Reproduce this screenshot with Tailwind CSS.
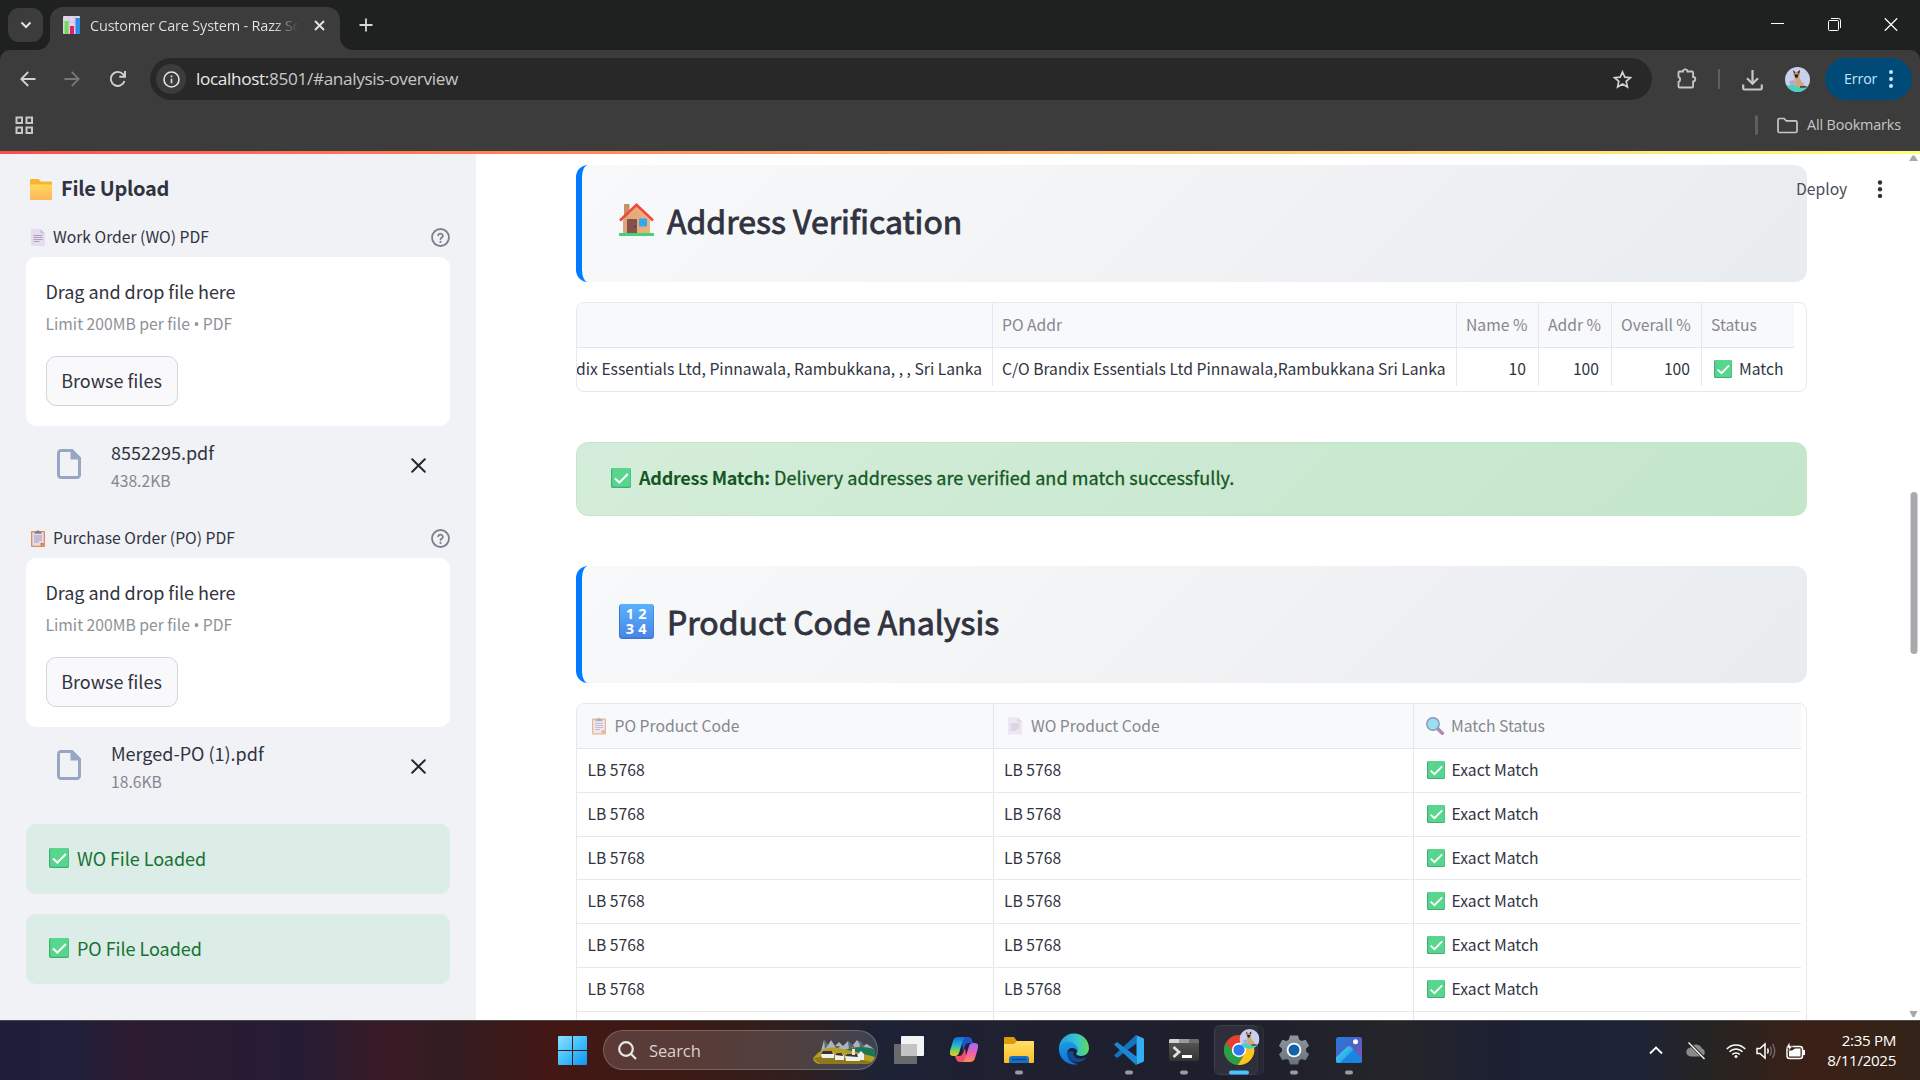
<!DOCTYPE html>
<html lang="en">
<head>
<meta charset="utf-8">
<title>Customer Care System - Razz Solutions</title>
<script src="https://cdn.jsdelivr.net/npm/@tailwindcss/browser@4"></script>
</head>
<body class="w-[1920px] h-[1080px] overflow-hidden bg-white font-['Noto_Sans_CJK_SC','Noto_Sans',sans-serif] text-[#31333f]">
<svg width="0" height="0" class="absolute">
  <defs>
    <linearGradient id="gFolder" x1="0" y1="0" x2="0" y2="1"><stop offset="0" stop-color="#ffd95a"/><stop offset="1" stop-color="#ffb45c"/></linearGradient>
    <linearGradient id="gWall" x1="0" y1="0" x2="1" y2="0"><stop offset="0" stop-color="#dfa47c"/><stop offset="1" stop-color="#eeb27a"/></linearGradient>
    <linearGradient id="gNum" x1="0" y1="0" x2="0" y2="1"><stop offset="0" stop-color="#57b3fd"/><stop offset="1" stop-color="#4a86e6"/></linearGradient>
    <linearGradient id="gWin" x1="0" y1="0" x2="1" y2="1"><stop offset="0" stop-color="#8ee0ff"/><stop offset=".5" stop-color="#41c0fb"/><stop offset="1" stop-color="#0f94f3"/></linearGradient>
    <linearGradient id="gExp" x1="0" y1="0" x2="0" y2="1"><stop offset="0" stop-color="#ffe06a"/><stop offset="1" stop-color="#fbbd22"/></linearGradient>
    <linearGradient id="gEdge" x1="0" y1="0" x2="1" y2="0"><stop offset="0" stop-color="#1f9fe0"/><stop offset=".55" stop-color="#35c1d8"/><stop offset="1" stop-color="#5fdc5a"/></linearGradient>
    <linearGradient id="gEdge2" x1="0" y1="0" x2="0" y2="1"><stop offset="0" stop-color="#1b9de2"/><stop offset="1" stop-color="#0f6fd8"/></linearGradient>
    <linearGradient id="gPho" x1="0" y1="0" x2="1" y2="1"><stop offset="0" stop-color="#1b7fe0"/><stop offset=".6" stop-color="#5a5cc0"/><stop offset="1" stop-color="#8a56b8"/></linearGradient>
    <linearGradient id="gPho2" x1="0" y1="0" x2="1" y2="1"><stop offset="0" stop-color="#4fe0f5"/><stop offset="1" stop-color="#1585e0"/></linearGradient>
    <linearGradient id="gCopA" x1="0" y1="0" x2="0" y2="1"><stop offset="0" stop-color="#1b66d8"/><stop offset=".45" stop-color="#22b8d0"/><stop offset=".75" stop-color="#8ed04a"/><stop offset="1" stop-color="#f5c52c"/></linearGradient>
    <linearGradient id="gCopB" x1="0" y1="0" x2="0" y2="1"><stop offset="0" stop-color="#9a6cf5"/><stop offset=".5" stop-color="#ea5fb8"/><stop offset="1" stop-color="#ff8a4a"/></linearGradient>
    <linearGradient id="gTerm" x1="0" y1="0" x2="0" y2="1"><stop offset="0" stop-color="#5a5a5a"/><stop offset="1" stop-color="#333"/></linearGradient>
    <linearGradient id="gGear" x1="0" y1="0" x2="0" y2="1"><stop offset="0" stop-color="#8d979d"/><stop offset="1" stop-color="#68737a"/></linearGradient>
    <clipPath id="round"><circle cx="12.5" cy="12.5" r="12.5"/></clipPath>
    <symbol id="check" viewBox="0 0 20 20"><rect width="20" height="20" rx="1.8" fill="#3fae76"/><rect x="1.2" width="18.3" height="18.8" rx="1.5" fill="#58d68d"/><path d="M4 10.6l4.3 4L16.8 6" fill="none" stroke="#fff" stroke-width="2"/></symbol>
    <symbol id="page" viewBox="0 0 14 17"><path d="M0 0h9.5L14 4.5V17H0z" fill="#e6dcf0"/><path d="M9.5 0L14 4.5H9.5z" fill="#cdbfda"/><path d="M2.500 6.500h9M2.500 8.500h9M2.500 10.500h9M2.500 12.500h6" stroke="#a899b8" stroke-width=".9"/></symbol>
    <symbol id="clip" viewBox="0 0 14 17"><rect y="1" width="14" height="16" rx=".8" fill="#e08e58"/><path d="M1.300 2.300h11.400V13L9.500 15.800H1.300z" fill="#e6dcf0"/><path d="M9.500 15.800V13h3.200z" fill="#c8733f"/><path d="M3.500 3.800V1.600h2L7 0l1.500 1.600h2v2.200z" fill="#84808c"/><path d="M3 6h8M3 8h8M3 10h8M3 12h5" stroke="#9d90ad" stroke-width=".9"/></symbol>
    <symbol id="loupe" viewBox="0 0 18 18"><path d="M12 12l4.300 4.300" stroke="#ad8aac" stroke-width="3.400" stroke-linecap="round"/><circle cx="7" cy="7" r="6.200" fill="#98dff0" stroke="#8f93be" stroke-width="1.400"/></symbol>
    <symbol id="help" viewBox="0 0 24 24"><g fill="none" stroke="#7d808c" stroke-width="2.300" stroke-linecap="round"><circle cx="12" cy="12" r="10.700"/><path d="M9 9.200a3.100 3.100 0 0 1 6 .8c0 2-3 2.300-3 4"/><path d="M12 17.500v.1" stroke-width="2.700"/></g></symbol>
    <symbol id="file" viewBox="0 0 24 30"><path d="M1.500 4a2.500 2.500 0 0 1 2.500-2.500h10.500l8 8V26a2.500 2.500 0 0 1-2.500 2.500H4A2.500 2.500 0 0 1 1.500 26z" fill="none" stroke="#97a6c3" stroke-width="3"/><path d="M13.500 0h2L24 8.500v2H13.500z" fill="#97a6c3"/></symbol>
    <symbol id="ex" viewBox="0 0 15 15"><path d="M1.200 1.200l12.600 12.600M13.800 1.200L1.200 13.800" stroke="#262730" stroke-width="2" stroke-linecap="round"/></symbol>
    <symbol id="cat" viewBox="0 0 25 25"><g clip-path="url(#round)"><rect width="25" height="25" fill="#c9d0ee"/><path d="M0 19q12-3 25 1v5H0z" fill="#45d2c4"/><path d="M4 15q3-3 6-1l-1 4H6z" fill="#a8add0"/><path d="M9.500 9h4l2.500 5q3.500 2 3.500 6H10z" fill="#cda77d"/><path d="M8 3l2 2h2.500L15 3l-.3 5q-1 3-3.100 3T8.500 8z" fill="#bd9876"/><path d="M8 3l2 2-.5 2zM15 3l-2.500 2 1.500 2z" fill="#1d1717"/><path d="M9.500 7.500h4l-1 3.200h-2z" fill="#281e1c"/><path d="M15 19h5l3 1-3 .8h-5z" fill="#5a4236"/></g></symbol>
  </defs>
</svg>

<div class="flex flex-col w-[1920px] h-[1080px]">

  <!-- Browser tab strip -->
  <div class="h-[50px] bg-[#1f2020] flex shrink-0 font-['Open_Sans',sans-serif]">
    <div class="ml-2 mt-2 w-[35px] h-[34px] rounded-[11px] bg-[#3c3c3c] flex items-center justify-center">
      <svg width="12" height="8" viewBox="0 0 12 8"><path d="M1.500 1.500L6 6l4.500-4.500" fill="none" stroke="#e3e3e3" stroke-width="2"/></svg>
    </div>
    <div class="relative ml-[7px] mt-[7px] w-[290px] h-[43px] bg-[#3c3c3c] rounded-t-[13px] flex items-center pl-[13px] pb-[7px]">
      <svg class="absolute -left-[13px] bottom-0" width="13" height="13"><path d="M13 0v13H0A13 13 0 0 0 13 0z" fill="#3c3c3c"/></svg>
      <svg class="absolute -right-[13px] bottom-0" width="13" height="13"><path d="M0 0v13h13A13 13 0 0 1 0 0z" fill="#3c3c3c"/></svg>
      <svg width="17" height="18" viewBox="0 0 17 18"><rect width="17" height="18" rx="1" fill="#e0d6ea"/><path d="M0 6h17M0 12h17M6 0v18M12 0v18" stroke="#c9bdd6" stroke-width=".7"/><path d="M1.500 5h4v13h-4z" fill="#72d95b"/><path d="M7 10h4v8H7z" fill="#e0245e"/><path d="M12.500 2H17v16h-4.500z" fill="#2b8fea"/></svg>
      <div class="ml-[10px] mt-px w-[209px] overflow-hidden whitespace-nowrap text-[14.500px] leading-5 tracking-[-0.2px] text-transparent bg-clip-text bg-linear-to-r from-[#e3e3e3] from-88% to-[#3c3c3c]">Customer Care System - Razz Solutions</div>
      <svg class="ml-[15px]" width="11" height="11" viewBox="0 0 11 11"><path d="M1 1l9 9M10 1l-9 9" stroke="#e3e3e3" stroke-width="1.900"/></svg>
    </div>
    <svg class="ml-[19px] mt-[18px]" width="14" height="14" viewBox="0 0 14 14"><path d="M7 .5v13M.5 7h13" stroke="#d8d8d8" stroke-width="1.800"/></svg>
    <div class="flex-1"></div>
    <div class="flex mt-[18px] mr-[22px] gap-[43.500px]">
      <svg width="13" height="13"><path d="M0 5.500h13" stroke="#fff"/></svg>
      <svg width="13" height="13" viewBox="0 0 13 13" fill="none" stroke="#fff"><rect x=".5" y="2.500" width="10" height="10" rx="1"/><path d="M3 .5h7.500a2 2 0 0 1 2 2V10"/></svg>
      <svg width="14" height="13" viewBox="0 0 14 13"><path d="M.8.300l12.400 12.400M13.200.300L.8 12.700" stroke="#fff" stroke-width="1.300"/></svg>
    </div>
  </div>

  <!-- Toolbar -->
  <div class="bg-[#1f2020] shrink-0">
  <div class="h-[58px] rounded-t-[10px] bg-[#3c3c3c] flex items-center font-['Open_Sans',sans-serif] text-[#c7c7c7]">
    <svg class="ml-5" width="16" height="16" viewBox="0 0 16 16" fill="none" stroke="#d2d2d2" stroke-width="1.800"><path d="M15.500 8H1.500M8.200 1L1.200 8l7 7"/></svg>
    <svg class="ml-7" width="16" height="16" viewBox="0 0 16 16" fill="none" stroke="#777" stroke-width="1.800"><path d="M.5 8h14M7.800 1l7 7-7 7"/></svg>
    <svg class="ml-[29px]" width="18" height="18" viewBox="0 0 18 18" fill="none" stroke="#d2d2d2" stroke-width="1.900"><path d="M15.500 11A7 7 0 1 1 14 4.200L16 6.500"/><path d="M16 1v5.700h-5.700"/></svg>
    <div class="ml-[23px] w-[1502px] h-[42px] rounded-full bg-[#282828] flex items-center pl-[6px] pr-5">
      <div class="size-[30px] rounded-full bg-[#3c3c3c] flex items-center justify-center">
        <svg width="17" height="17" viewBox="0 0 17 17" fill="none" stroke="#e3e3e3" stroke-width="1.600"><circle cx="8.500" cy="8.500" r="7.500"/><path d="M8.500 7.700v4.600M8.500 4.600v1.700"/></svg>
      </div>
      <div class="ml-[10px] text-[17.200px] leading-6 tracking-[-0.35px] whitespace-nowrap"><span class="text-[#e8e8e8]">localhost:</span>8501/#analysis-overview</div>
      <svg class="ml-auto" width="19" height="19" viewBox="0 0 19 19"><path d="M9.500 2l2.300 5.200 5.600.5-4.200 3.700 1.200 5.500-4.900-2.900-4.900 2.900 1.200-5.500L1.600 7.700l5.600-.5z" fill="none" stroke="#d2d2d2" stroke-width="1.700"/></svg>
    </div>
    <svg class="ml-6" width="22" height="22" viewBox="0 0 22 22"><path d="M2.500 4.500q0-1 1-1H7a2.200 2.200 0 0 1 4.400 0h4.700q1 0 1 1V9a2.200 2.200 0 0 1 0 4.400v5.100q0 1-1 1H3.500q-1 0-1-1v-4.600a2.700 2.700 0 0 0 0-5z" fill="none" stroke="#c7c7c7" stroke-width="1.800"/></svg>
    <div class="ml-5 w-[2px] h-5 bg-[#5e5e5e]"></div>
    <svg class="ml-[22px] mt-1" width="21" height="22" viewBox="0 0 21 22" fill="none" stroke="#c7c7c7" stroke-width="2.200"><path d="M10.500 0v13.500M5 8.200l5.500 5.500L16 8.200M1.200 14.500v3.700q0 1.300 1.300 1.300h16q1.300 0 1.300-1.300v-3.700"/></svg>
    <svg class="ml-[22px]" width="25" height="25"><use href="#cat"/></svg>
    <div class="ml-[15px] w-[87px] h-[42px] rounded-full bg-[#004a77] flex items-center pl-[19px] text-[14.200px] text-[#c2e7ff] tracking-[-0.1px]">Error
      <svg class="ml-[12px]" width="4" height="18" viewBox="0 0 4 18" fill="#c2e7ff"><circle cx="2" cy="2" r="2"/><circle cx="2" cy="9" r="2"/><circle cx="2" cy="16" r="2"/></svg>
    </div>
  </div>
  </div>
  <div class="h-[43px] shrink-0 bg-[#3c3c3c] flex items-start pt-[7px] font-['Open_Sans',sans-serif]">
    <svg class="ml-[15px] mt-[1px]" width="19" height="19" viewBox="0 0 19 19" fill="none" stroke="#c7c7c7" stroke-width="2"><rect x="1.500" y="1.500" width="5.500" height="5.500"/><rect x="11.500" y="1.500" width="5.500" height="5.500"/><rect x="1.500" y="11.500" width="5.500" height="5.500"/><rect x="11.500" y="11.500" width="5.500" height="5.500"/></svg>
    <div class="ml-auto w-[3px] h-5 rounded-full bg-[#5e5e5e]"></div>
    <svg class="ml-[19px] mt-[2px]" width="21" height="17" viewBox="0 0 21 17"><path d="M1 3q0-1.500 1.500-1.500H7l2.300 2.300h9.200q1.500 0 1.500 1.500V14q0 1.500-1.500 1.500h-16Q1 15.500 1 14z" fill="none" stroke="#c7c7c7" stroke-width="1.700"/></svg>
    <div class="ml-[9px] mr-[18px] w-[95px] text-[14.400px] leading-5 text-[#c7c7c7] tracking-[-0.15px] whitespace-nowrap">All Bookmarks</div>
  </div>
  <div class="h-[3px] shrink-0 bg-linear-to-r from-[#ff4b4b] to-[#fffd80]"></div>

  <!-- App -->
  <div class="h-[866px] shrink-0 flex overflow-hidden">
    <aside class="w-[476px] shrink-0 bg-[#f0f2f6] px-[26px] pt-[23px] text-[#31333f]">
      <div class="flex items-center h-6 pl-1">
        <svg width="22" height="21" viewBox="0 0 22 21"><path d="M0 1q0-1 1-1h7.500L11 2.500h10q1 0 1 1V10H0z" fill="#f9b233"/><path d="M0 6.500q0-1 1-1h20q1 0 1 1V20q0 1-1 1H1q-1 0-1-1z" fill="url(#gFolder)"/></svg>
        <div class="ml-[9px] -mt-[2px] font-semibold text-[20px] tracking-[-0.3px] leading-6 whitespace-nowrap">File Upload</div>
      </div>
      <div id="uploads"></div>
      <div class="mt-[19px] h-[70px] rounded-[10px] bg-[#dcece6] flex items-center pl-[23px] text-[#177233] text-[18px] leading-6 pb-[2px]"><svg width="20" height="20"><use href="#check"/></svg><span class="ml-2 -mt-px whitespace-nowrap tracking-[-0.04px]">WO File Loaded</span></div>
      <div class="mt-5 h-[70px] rounded-[10px] bg-[#dcece6] flex items-center pl-[23px] text-[#177233] text-[18px] leading-6 pb-[2px]"><svg width="20" height="20"><use href="#check"/></svg><span class="ml-2 -mt-px whitespace-nowrap tracking-[-0.04px]">PO File Loaded</span></div>
    </aside>

    <main class="relative flex-1 h-[866px] pl-[100px] pt-[11px] overflow-hidden">
      <div class="w-[1231px]">
        <section class="h-[117px] rounded-xl border-l-[6px] border-[#007bff] bg-linear-135 from-[#f8f9fa] to-[#e9ecef] flex pl-[37px] pt-[37px]">
          <svg width="35" height="36" viewBox="0 0 35 36"><path d="M5 2h5.500v10L5 17z" fill="#c98f6a"/><path d="M4 18L17.500 5 31 18v14H4z" fill="url(#gWall)"/><path d="M1 18.500L17.500 3 34 18.500" fill="none" stroke="#ee4b39" stroke-width="2.800"/><rect x="8" y="17" width="10" height="14" fill="#86514b"/><circle cx="16" cy="24.500" r=".8" fill="#4c2c2b"/><rect x="20" y="16.500" width="8" height="8" fill="#2fa9f4"/><rect y="31" width="35" height="3" rx=".5" fill="#46cf7c"/></svg>
          <div class="ml-[13px] -mt-[2px] font-normal [-webkit-text-stroke:0.9px_#31333f] text-[32px] leading-10 whitespace-nowrap">Address Verification</div>
        </section>

        <div class="mt-5 h-[90px] rounded-lg border border-[#e6e8eb] overflow-hidden text-[15.700px]">
          <div class="grid grid-cols-[416px_464px_82px_73px_90px_92px] h-[45px] w-[1217px] bg-[#f8f9fb] border-b border-[#e3e5e9] items-center text-[#85878f] leading-6 whitespace-nowrap divide-x divide-[#e6e7ea]">
            <div class="h-[44px]"></div>
            <div class="h-[44px] pt-[10px] pl-[9px]">PO Addr</div>
            <div class="h-[44px] pt-[10px] pl-[9px]">Name %</div>
            <div class="h-[44px] pt-[10px] pl-[9px]">Addr %</div>
            <div class="h-[44px] pt-[10px] pl-[9px]">Overall %</div>
            <div class="h-[44px] pt-[10px] pl-[9px]">Status</div>
          </div>
          <div class="grid grid-cols-[416px_464px_82px_73px_90px_92px] h-[38px] w-[1217px] leading-6 whitespace-nowrap divide-x divide-[#e6e7ea]">
            <div class="pt-[9px] pr-[10px] flex justify-end overflow-hidden">C/O Brandix Essentials Ltd, Pinnawala, Rambukkana, , , Sri Lanka</div>
            <div class="pt-[9px] pl-[9px]">C/O Brandix Essentials Ltd Pinnawala,Rambukkana Sri Lanka</div>
            <div class="pt-[9px] pr-[12px] text-right">10</div>
            <div class="pt-[9px] pr-[12px] text-right">100</div>
            <div class="pt-[9px] pr-[11px] text-right">100</div>
            <div class="pt-[9px] pl-[12px] flex"><svg class="mt-[3px]" width="18" height="18"><use href="#check"/></svg><span class="ml-[7px]">Match</span></div>
          </div>
        </div>

        <div class="mt-[50px] h-[74px] rounded-xl border border-[#c3e6cb] bg-linear-135 from-[#d4edda] to-[#c3e6cb] flex items-start pt-[25px] pl-[34px] text-[18px] leading-6 text-[#155724]">
          <svg width="20" height="20"><use href="#check"/></svg>
          <div class="ml-2 -mt-[3px] whitespace-nowrap tracking-[0.06px] [-webkit-text-stroke:0.3px_#155724]"><b class="font-semibold tracking-[-0.25px] [-webkit-text-stroke:0px]">Address Match:</b> Delivery addresses are verified and match successfully.</div>
        </div>

        <section class="mt-[50px] h-[117px] rounded-xl border-l-[6px] border-[#007bff] bg-linear-135 from-[#f8f9fa] to-[#e9ecef] flex pl-[37px] pt-[38px]">
          <svg width="35" height="35" viewBox="0 0 35 35"><rect width="35" height="35" rx="3.500" fill="#3f74d0"/><rect x="1" width="33.500" height="33.500" rx="3" fill="url(#gNum)"/><g fill="#fff" font-family="Open Sans, sans-serif" font-weight="700" font-size="14.500" text-anchor="middle"><text x="11" y="14.500">1</text><text x="23.500" y="14.500">2</text><text x="11" y="29.500">3</text><text x="23.500" y="29.500">4</text></g></svg>
          <div class="ml-[13px] -mt-[3px] font-normal [-webkit-text-stroke:0.9px_#31333f] text-[32px] leading-10 whitespace-nowrap">Product Code Analysis</div>
        </section>

        <div class="mt-5 h-[330px] rounded-t-lg border border-[#e6e8eb] overflow-hidden text-[15.700px]">
          <div class="grid grid-cols-[417px_420px_387px] h-[45px] w-[1224px] bg-[#f8f9fb] border-b border-[#e3e5e9] text-[#85878f] leading-6 whitespace-nowrap divide-x divide-[#e6e7ea]">
            <div class="flex pt-[10px] pl-[15px]"><svg class="opacity-60 mt-[3px]" width="14" height="18"><use href="#clip"/></svg><span class="ml-[8.500px]">PO Product Code</span></div>
            <div class="flex pt-[10px] pl-[14px]"><svg class="opacity-60 mt-[3px]" width="14" height="18"><use href="#page"/></svg><span class="ml-[9px]">WO Product Code</span></div>
            <div class="flex pt-[10px] pl-[12px]"><svg class="mt-[3px]" width="18" height="18"><use href="#loupe"/></svg><span class="ml-[7px]">Match Status</span></div>
          </div>
          <div id="rows"></div>
        </div>
      </div>

      <div class="absolute left-[1320px] top-[23px] flex items-center text-[15.700px] leading-6 text-[#4a4c57]">Deploy
        <svg class="absolute left-[81px] top-[3px]" width="6" height="19" viewBox="0 0 6 19" fill="#31333f"><circle cx="3" cy="2.500" r="2.200"/><circle cx="3" cy="9.200" r="2.200"/><circle cx="3" cy="15.900" r="2.200"/></svg>
      </div>
      <svg class="absolute right-[2px] top-0" width="9" height="866" viewBox="0 0 9 866" fill="#a9a9ad"><path d="M0 7l3.500-5.500h2L9 7zM.5 857h8L5.500 863h-2z"/><rect x="1.500" y="338" width="7" height="162" rx="3.500"/></svg>
    </main>
  </div>

  <!-- Taskbar -->
  <div class="h-[60px] shrink-0 border-t border-[#4a4a4c] flex items-start font-['Open_Sans',sans-serif] bg-[linear-gradient(90deg,#1f1d3a_0px,#20203a_70px,#2c1b31_130px,#251c34_300px,#3a1b25_385px,#321d22_450px,#431714_550px,#3c1a14_680px,#30201f_800px,#1d2235_880px,#1f2030_1000px,#1e1f2c_1250px,#25252a_1400px,#1c2032_1500px,#1d2438_1630px,#262422_1710px,#3b2016_1810px,#332318_1920px)]">
    <svg class="ml-[558px] mt-[15px]" width="29" height="29" viewBox="0 0 29 29" fill="url(#gWin)"><path d="M1 0h13v14H0V1q0-1 1-1zM15 0h13q1 0 1 1v13H15zM0 15h14v14H1q-1 0-1-1zM15 15h14v13q0 1-1 1H15z"/></svg>
    <div class="ml-4 mt-[9px] w-[275px] h-10 rounded-full border border-white/20 bg-white/15 flex items-center pl-[14px]">
      <svg width="19" height="19" viewBox="0 0 19 19" fill="none" stroke="#e8e8e8" stroke-width="2.200"><circle cx="8" cy="8" r="6.800"/><path d="M12.800 12.800l5.200 5.200"/></svg>
      <div class="ml-[12px] mt-px text-[16.500px] leading-6 text-[#d8d2d0] tracking-[-0.1px]">Search</div>
      <svg class="ml-auto mr-[2px]" width="62" height="27" viewBox="0 0 62 27"><path d="M8 14l3-11 4 5 3-5 4 6 4-4 4 4 5-5 4 5 5-6 5 6 5-2 7 5v9H8z" fill="#a9b4bd"/><path d="M11 3l1 9 3-4zM22 9l1 6 4-6zM35 4l1 9 5-4zM46 3l1 9 5-3z" fill="#5d6873"/><path d="M30 14q14-7 32-2v9H26z" fill="#1f7558"/><path d="M0 21Q10 8 25 11t37 9q-2 7-10 7H6q-6-2-6-6z" fill="#b79d24"/><path d="M0 21q20-5 60 4l-6 2H7z" fill="#8d7820"/><path d="M8 17l2-3h9l2 3v4H9zM22 18l2-2h5l2 3v4h-9zM32 19l2-2h10l3 3v4H33zM45 17l3-3 3 3v6h-6z" fill="#f0f0ee"/><path d="M8 17l2-3h9l1 3zM32 19l2-2h10l1 3zM22 18l2-2h5l1 3z" fill="#3b3235"/><path d="M39 18v-6l1.500-4 1.500 4v6z" fill="#e9e3dc"/><path d="M39 12l1.500-4 1.500 4z" fill="#b13b2c"/></svg>
    </div>
    <div class="ml-4 mt-[4px] flex">
      <svg width="30" height="50" viewBox="0 -11 30 50"><rect x="7" width="23" height="20" rx="1" fill="#f4f4f4"/><rect y="8" width="23" height="20" rx="1" fill="#777" fill-opacity=".85"/><rect x="7" y="8" width="16" height="12" fill="#c4c4c4"/></svg>
      <svg class="ml-[26px]" width="28" height="50" viewBox="0 -12 28 50"><path d="M11 0h7q3 0 4 3l1 3h-4q-3 0-4 3l-2 5z" fill="#1b55c8"/><path d="M17 25h-7q-3 0-4-3l-1-3h4q3 0 4-3l2-5z" fill="#f0506a"/><path d="M8 0h8q-2 0-3 3l-4 13q-1 3-4 3H3q-4 0-3-5L3 4q1-4 5-4z" fill="url(#gCopA)"/><path d="M20 25h-8q2 0 3-3l4-13q1-3 4-3h2q4 0 3 5l-3 10q-1 4-5 4z" fill="url(#gCopB)"/></svg>
      <svg class="ml-[26px]" width="30" height="50" viewBox="0 -12 30 50"><path d="M0 1q0-1 1-1h9l3 4h13v7H0z" fill="#dc9a0c"/><path d="M0 7h10l3-3h16q1 0 1 1v20q0 1-1 1H1q-1 0-1-1z" fill="url(#gExp)"/><path d="M5 26v-4q0-3 3-3h14q3 0 3 3v4z" fill="#1473c6"/><path d="M8.500 22.500h13" stroke="#0b4a84" stroke-width="1.500" stroke-linecap="round"/><rect x="11" y="33.500" width="8" height="4" rx="2" fill="#9a9aa0"/></svg>
      <svg class="ml-[25px]" width="30" height="50" viewBox="0 -10 30 50"><path d="M0 14A15 15 0 0 1 30 13c0 5-3.500 8-8 8-3 0-5.500-1-4.500-3 2.500-4-1-8-5-8C7 10 3 13 3 20q-3-3-3-6z" fill="url(#gEdge)"/><path d="M0 14C1 8 7 5 12 7c5 1.500 8 6 6.500 10-1-3-3.500-4.500-6-4-4 .5-5 5-3.500 9 1.500 4 6 7 10 7A15 15 0 0 1 0 14z" fill="url(#gEdge2)"/><path d="M9 18c-1 6 5 10 11 9 3-.5 6-2 7.500-5-5 3-12 2-13-2-.5-2 .5-3 .5-3-3-2-5.500-1-6 1z" fill="#114a96"/></svg>
      <svg class="ml-[25px]" width="30" height="50" viewBox="0 -10 30 50"><path d="M22 0L2 18.500l-2 2 3 2.500 20-15z" fill="#1275bd"/><path d="M0 9.500L3 7l20 15-1 8L2 11.500z" fill="#1b87d2"/><path d="M21.500 0L29 3q1 .5 1 1.500v21q0 1-1 1.500l-7.500 3q1-.5 1-2V2q0-1.500-1-2z" fill="#32aef5"/><rect x="11" y="35.500" width="8" height="4" rx="2" fill="#9a9aa0"/></svg>
      <svg class="ml-[25px]" width="30" height="50" viewBox="0 -14 30 50"><rect width="30" height="22" rx="1.500" fill="url(#gTerm)"/><path d="M0 4V1.500Q0 0 1.500 0H10v4z" fill="#d4d4d4"/><path d="M10 0h10v4H10z" fill="#9a9a9a"/><path d="M20 0h8.500Q30 0 30 1.500V4H20z" fill="#6c6c6c"/><path d="M4.500 8l5.500 5-5.500 5" fill="none" stroke="#e0e0e0" stroke-width="2.800"/><path d="M13 17.500h10" stroke="#fff" stroke-width="3"/><rect x="11" y="31.500" width="8" height="4" rx="2" fill="#9a9aa0"/></svg>
      <svg class="ml-[15px]" width="50" height="50" viewBox="0 0 50 50"><rect x=".5" y=".5" width="49" height="49" rx="5" fill="#fff" fill-opacity=".04" stroke="#fff" stroke-opacity=".06"/><rect x=".5" y=".5" width="43" height="49" rx="5" fill="#fff" fill-opacity=".04" stroke="#fff" stroke-opacity=".06"/><circle cx="25" cy="25" r="15" fill="#e8402f"/><path d="M12 17.500l9 12 8 2-5 8.500A15 15 0 0 1 12 17.500z" fill="#27a046"/><path d="M24 40l7.500-12.500L30 18h8.500A15 15 0 0 1 24 40z" fill="#fcc51a"/><circle cx="25" cy="25" r="7.200" fill="#fff"/><circle cx="25" cy="25" r="5.600" fill="#2f78ea"/><svg x="25.500" y="4" width="20" height="20" viewBox="0 0 25 25"><use href="#cat" width="25" height="25"/></svg><rect x="15" y="45.500" width="20" height="4" rx="2" fill="#4cc2ff"/></svg>
      <svg class="ml-[15px]" width="30" height="50" viewBox="0 -10 30 50"><path d="M11 0.500h8l1.200 4.200 2.300 1.300 4.200-1.200 3.300 6-3 3v2.500l3 3-3.300 6-4.200-1.200-2.300 1.300L19 29.500h-8l-1.200-4.200L7.500 24l-4.200 1.200-3.300-6 3-3v-2.500l-3-3 3.300-6L7.500 6l2.300-1.300z" fill="url(#gGear)"/><circle cx="15" cy="15" r="7.300" fill="#fff"/><circle cx="15" cy="15" r="5.500" fill="#1161ab"/><rect x="11" y="35.500" width="8" height="4" rx="2" fill="#9a9aa0"/></svg>
      <svg class="ml-[27px]" width="26" height="50" viewBox="0 -12 26 50"><rect width="26" height="26" rx="2.500" fill="url(#gPho)"/><path d="M0 20.500L11 10q2-1.500 4 0l11 12v1.500q0 2.500-2.500 2.500h-21Q0 26 0 23.500z" fill="#1985e2"/><path d="M0 20.500L11 10q2-1.500 4 0l2.500 2.700L4 26H2.500Q0 26 0 23.500z" fill="url(#gPho2)"/><circle cx="19.500" cy="4.700" r="2.500" fill="#fff"/><rect x="9" y="33.500" width="8" height="4" rx="2" fill="#9a9aa0"/></svg>
    </div>
    <div class="flex-1"></div>
    <div class="flex items-center h-[59px] pr-6 text-white">
      <svg width="14" height="9" viewBox="0 0 14 9"><path d="M1 7.500l6-6 6 6" fill="none" stroke="#fff" stroke-width="1.800"/></svg>
      <svg class="ml-[23px]" width="20" height="18" viewBox="0 0 20 18"><path d="M5 14.500a4.500 4.500 0 0 1-.5-9A6.500 6.500 0 0 1 16 6.500a4.200 4.200 0 0 1-.5 8z" fill="#8a8a8a"/><path d="M3 1l15.500 15.500" stroke="#222" stroke-width="3"/><path d="M2.500.500l16 16.500" stroke="#fff" stroke-width="1.300"/></svg>
      <svg class="ml-[20px]" width="20" height="16" viewBox="0 0 20 16" fill="none" stroke="#fff" stroke-width="1.500"><path d="M.8 6a12.500 12.500 0 0 1 18.400 0M3.500 8.800a9 9 0 0 1 13 0M6.200 11.500a5.300 5.300 0 0 1 7.600 0"/><circle cx="10" cy="13.500" r="1.500" fill="#fff" stroke="none"/></svg>
      <svg class="ml-[10px]" width="20" height="18" viewBox="0 0 20 18" fill="none" stroke="#fff" stroke-width="1.500"><path d="M1 6.500h3L9 2v14l-5-4.500H1z"/><path d="M11.500 6.500q1.500 2.500 0 5"/><path d="M14 4.500q3 4.500 0 9M16.500 2q4.500 7 0 14" stroke="#6d6564"/></svg>
      <svg class="ml-[9px]" width="21" height="18" viewBox="0 0 21 18"><rect x="2" y="4.500" width="15.500" height="12" rx="2.500" fill="none" stroke="#fff" stroke-width="1.500"/><path d="M4 8.500h3l3-2h5.500v8H4zM18 8h2v5h-2z" fill="#fff"/><path d="M4.500 0L1 6h3l-1 4 4.500-6H5z" fill="#fff" stroke="#33241f" stroke-width=".5"/></svg>
      <div class="ml-[18px] -mt-[2px] w-[72px] text-right text-[15.200px] leading-5 tracking-[-0.35px] whitespace-nowrap">2:35 PM<br>8/11/2025</div>
    </div>
  </div>
</div>

<script>
const uploads = [
  ["page", "Work Order (WO) PDF", "8552295.pdf", "438.2KB", "mt-[24px]"],
  ["clip", "Purchase Order (PO) PDF", "Merged-PO (1).pdf", "18.6KB", "mt-[22px]"]
];
document.getElementById("uploads").innerHTML = uploads.map(([icon, label, name, size, gap]) => `
  <div class="${gap}">
    <div class="flex items-center h-6 pl-[5px] text-[15.700px] leading-6 whitespace-nowrap">
      <svg width="14" height="17"><use href="#${icon}"/></svg><span class="ml-2">${label}</span>
      <svg class="ml-auto" width="19" height="19"><use href="#help"/></svg>
    </div>
    <div class="mt-[8px] h-[169px] rounded-[10px] bg-white pl-[19.500px] pt-[21px] whitespace-nowrap">
      <div class="text-[18px] tracking-[-0.05px] leading-[26px]">Drag and drop file here</div>
      <div class="mt-[7px] text-[15.700px] leading-[26px] text-[#8f9198]">Limit 200MB per file <span class="font-['Open_Sans']">•</span> PDF</div>
      <div class="mt-[19px] w-[132px] h-[50px] rounded-[10px] border border-[#d3d4d8] bg-[#f9f9fb] flex items-center justify-center text-[18px] leading-6 pb-[3px]">Browse files</div>
    </div>
    <div class="h-[78px] flex pt-[23px] pl-[31px] pr-6 whitespace-nowrap">
      <svg width="24" height="30"><use href="#file"/></svg>
      <div class="ml-[30px] -mt-[11px]"><div class="text-[18px] leading-7">${name}</div><div class="text-[15.700px] leading-6 text-[#85878f] mt-[3px]">${size}</div></div>
      <svg class="ml-auto mt-[9px]" width="15" height="15"><use href="#ex"/></svg>
    </div>
  </div>`).join("");
document.getElementById("rows").innerHTML = Array(6).fill("LB 5768").map(code => `
  <div class="grid grid-cols-[417px_420px_387px] h-[43.750px] w-[1224px] border-b border-[#e8e9eb] leading-6 whitespace-nowrap divide-x divide-[#e6e7ea]">
    <div class="pt-[9px] pl-[10.500px]">${code}</div>
    <div class="pt-[9px] pl-[10px]">${code}</div>
    <div class="pt-[9px] pl-[12.500px] flex"><svg class="mt-[3px]" width="18" height="18"><use href="#check"/></svg><span class="ml-[7px]">Exact Match</span></div>
  </div>`).join("") + `
  <div class="grid grid-cols-[417px_420px_387px] h-[43.750px] w-[1224px] divide-x divide-[#e6e7ea]"><div></div><div></div><div></div></div>`;
</script>
</body>
</html>
